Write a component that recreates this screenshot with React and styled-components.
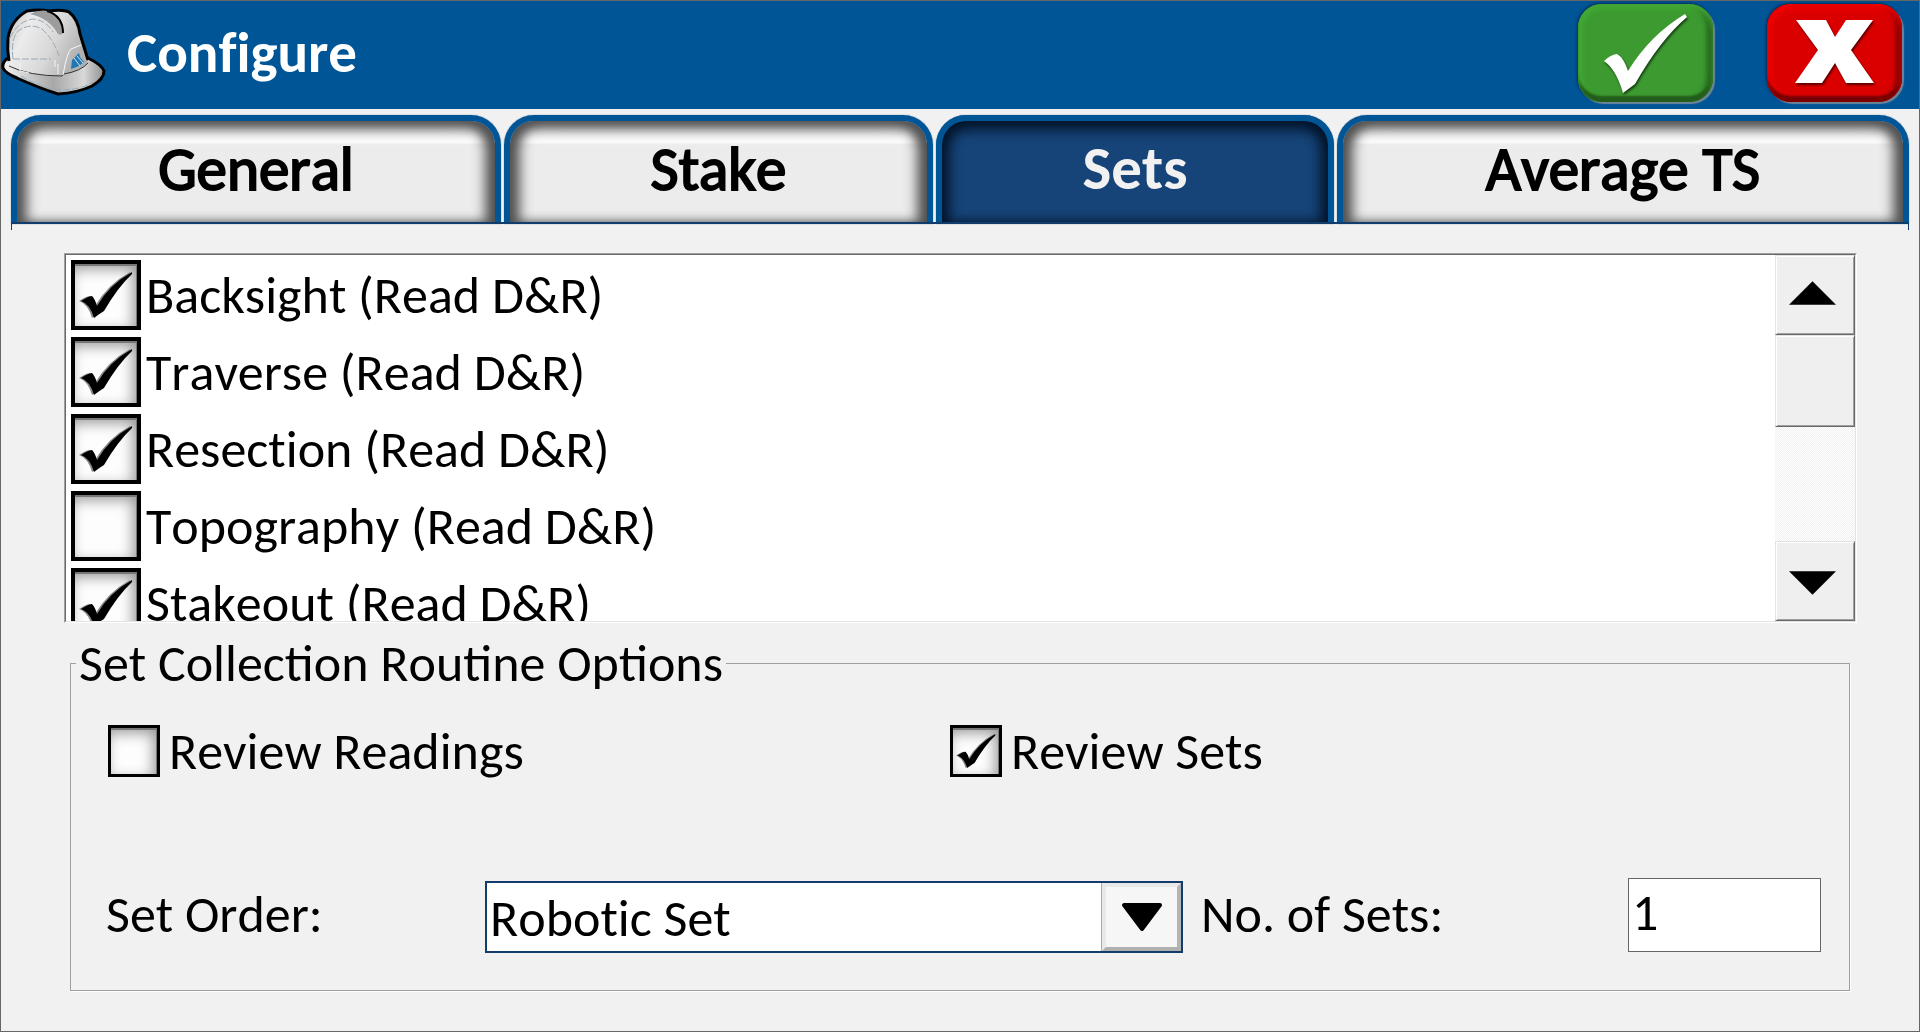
import React, { useState } from "react";
import styled, { createGlobalStyle, css } from "styled-components";

const GlobalStyle = createGlobalStyle`
  *, *::before, *::after { box-sizing: border-box; }
  body { margin: 0; background: #f1f1f1; }
  body, button, input, select {
    font-family: Carlito, Calibri, Lato, "Open Sans", sans-serif;
    font-kerning: none;
    color: #000;
  }
  button, input, select { margin: 0; padding: 0; }
`;

const textSize = css`
  font-size: 52px;
  line-height: 64px;
  font-variant-ligatures: none;
`;

const Window = styled.div`
  display: flex;
  flex-direction: column;
  min-height: 100vh;
  border: 1px solid #666;
  background: #f1f1f1;
`;

const Header = styled.header`
  display: flex;
  align-items: flex-start;
  height: 108px;
  padding: 3px 17px 0 0;
  background: #005596;
`;

const Helmet = styled.svg`
  flex: none;
  width: 105px;
  height: 97px;
`;

const Title = styled.h1`
  flex: 1;
  margin: 0 0 0 21px;
  padding-top: 13px;
  color: #fff;
  font-size: 57px;
  line-height: 72px;
  font-weight: 700;
  font-variant-ligatures: none;
`;

const HeaderActions = styled.div`
  display: flex;
  gap: 54px;
`;

const ActionButton = styled.button`
  display: block;
  width: 135px;
  height: 98px;
  border: 0;
  border-radius: 24px;
  background: ${(p) => p.$fill};
  box-shadow:
    inset 0 5px 6px ${(p) => p.$light},
    inset 0 -6px 2px ${(p) => p.$dark},
    inset -6px 0 5px ${(p) => p.$dark},
    inset 4px 0 6px ${(p) => p.$light},
    2px 2px 1px #6f8597,
    -1px -1px 3px #002c58;
  svg {
    display: block;
    width: 135px;
    height: 98px;
    filter: drop-shadow(1px 2px 1px rgba(0, 0, 0, 0.6));
  }
`;

const TabBar = styled.nav`
  display: flex;
  gap: 3px;
  height: 115px;
  margin: 6px 10px 0 10px;
  padding-bottom: 6px;
  background:
    linear-gradient(#123c6c, #123c6c) left bottom / 1px 6px no-repeat,
    linear-gradient(#123c6c, #123c6c) right bottom / 1px 6px no-repeat;
`;

const Tab = styled.button`
  flex: ${(p) => p.$grow} 1 0;
  border: 6px solid #005596;
  border-bottom: 2px solid #123c6c;
  border-radius: 30px 30px 0 0;
  padding-bottom: ${(p) => (p.$active ? "7px" : "5px")};
  font-size: 61px;
  line-height: 72px;
  font-weight: ${(p) => (p.$active ? 700 : 400)};
  -webkit-text-stroke: ${(p) => (p.$active ? "0" : "2px #000")};
  font-variant-ligatures: none;
  color: ${(p) => (p.$active ? "#f1f1f1" : "#000")};
  background: ${(p) =>
    p.$active
      ? "#164478"
      : "linear-gradient(#fff 21px, #ececec 24px)"};
  box-shadow:
    0 0 1px #123c6c,
    ${(p) =>
      p.$active
        ? "inset 0 8px 14px #03152b, inset 10px 0 14px -4px #03152b, inset -10px 0 14px -4px #03152b"
        : "inset 0 8px 14px #505050, inset 13px 0 14px -4px #505050, inset -13px 0 14px -4px #505050"};
`;

const TabLine = styled.div`
  height: 2px;
  margin: -8px 10px 6px;
  background: #123c6c;
`;

const Page = styled.main`
  display: flex;
  flex-direction: column;
  padding: 23px 62px 40px 63px;
`;

const ListBox = styled.div`
  display: flex;
  height: 370px;
  border: 1px solid;
  border-color: #a0a0a0 #fff #fff #a0a0a0;
  background: #fff;
`;

const ListInner = styled.div`
  display: flex;
  flex: 1;
  min-width: 0;
  border: 1px solid;
  border-color: #696969 #e3e3e3 #e3e3e3 #696969;
`;

const Items = styled.ul`
  flex: 1;
  margin: 0;
  padding: 5px 0 0 5px;
  list-style: none;
  overflow: hidden;
`;

const Item = styled.li`
  display: flex;
  height: 77px;
`;

const CheckLabel = styled.label`
  display: flex;
  align-items: center;
  gap: ${(p) => (p.$small ? "9px" : "5px")};
  height: ${(p) => (p.$small ? "52px" : "70px")};
  ${textSize}
`;

const CheckCell = styled.span`
  display: grid;
  flex: none;
  width: ${(p) => (p.$small ? "52px" : "70px")};
  height: ${(p) => (p.$small ? "52px" : "70px")};
  > * { grid-area: 1 / 1; width: 100%; height: 100%; }
  svg { pointer-events: none; }
`;

const CheckInput = styled.input`
  appearance: none;
  border: ${(p) => (p.$small ? "3px" : "4px")} solid #000;
  background: #fdfdfd;
  box-shadow: inset -1px 2px 0 #777, inset -4px 5px 14px rgba(0, 0, 0, 0.4);
`;

const ScrollBar = styled.div`
  display: flex;
  flex-direction: column;
  width: 80px;
  background: repeating-conic-gradient(#f0f0f0 0 25%, #fff 0 50%) 0 0 / 2px 2px;
`;

const bevel = css`
  border: 1px solid;
  border-color: #e3e3e3 #696969 #696969 #e3e3e3;
  background: #efefef;
  box-shadow: inset 1px 1px 0 #fff, inset -1px -1px 0 #a0a0a0;
`;

const ScrollButton = styled.button`
  display: flex;
  align-items: center;
  justify-content: center;
  height: 80px;
  padding: ${(p) => (p.$down ? "4px 5px 0 0" : "0 5px 4px 0")};
  ${bevel}
`;

const Thumb = styled.div`
  height: 92px;
  margin-bottom: auto;
  ${bevel}
`;

const Group = styled.fieldset`
  min-width: 0;
  margin: 8px 7px 0 6px;
  padding: 30px 28px 37px 35px;
  border: 1px solid #a0a0a0;
  box-shadow: 1px 1px 0 #fff;
`;

const Legend = styled.legend`
  margin-left: -30px;
  padding: 0 3px;
  ${textSize}
  font-variant-ligatures: normal;
`;

const Checks = styled.div`
  display: grid;
  grid-template-columns: 842fr 871fr;
  padding-left: 2px;
`;

const OrderRow = styled.div`
  display: flex;
  align-items: center;
  margin-top: 100px;
`;

const FieldLabel = styled.label`
  flex: none;
  width: ${(p) => p.$width};
  padding: 0 0 2px ${(p) => p.$pad || "0"};
  ${textSize}
`;

const SelectWrap = styled.div`
  display: grid;
  flex: 1;
  height: 72px;
  margin-top: 4px;
  border: 2px solid #123c6c;
  background: #fff;
  > * { grid-area: 1 / 1; }
`;

const Select = styled.select`
  width: 100%;
  height: 100%;
  appearance: none;
  border: 0;
  border-radius: 0;
  padding: 2px 84px 0 3px;
  background: transparent;
  outline: 0;
  ${textSize}
`;

const SelectArrow = styled.span`
  display: flex;
  align-items: center;
  justify-content: center;
  justify-self: end;
  width: 79px;
  border: 4px solid;
  border-color: #e8e8e8 #b4b4b4 #b0b0b0 #e8e8e8;
  background: #f6f6f6;
  box-shadow: -1px 0 0 #aaa;
  pointer-events: none;
`;

const NumberInput = styled.input`
  width: 193px;
  height: 74px;
  border: 1px solid #666;
  border-radius: 0;
  padding: 0 3px 6px;
  background: #fff;
  outline: 0;
  ${textSize}
`;

const CHECK =
  "M9 41 L14 38 Q18 36 20 36 Q23 39 25 46 Q38 24 60 12 L60 14 Q46 27 32 51 Q27 54 22 58 Q18 44 9 41Z";

function Check({ label, small, initial }) {
  const [on, setOn] = useState(initial);
  return (
    <CheckLabel $small={small}>
      <CheckCell $small={small}>
        <CheckInput
          type="checkbox"
          $small={small}
          checked={on}
          onChange={(e) => setOn(e.target.checked)}
        />
        {on && (
          <svg viewBox="0 0 70 70" aria-hidden="true">
            <path d={CHECK} fill="#888" transform="translate(-1 0)" />
            <path d={CHECK} fill="#000" transform="translate(1 0)" />
          </svg>
        )}
      </CheckCell>
      {label}
    </CheckLabel>
  );
}

function HelmetIcon() {
  return (
    <Helmet viewBox="0 4 105 97" aria-hidden="true">
      <defs>
        <linearGradient id="dome" x1="0" y1="0" x2="1" y2="0.4">
          <stop offset="0" stopColor="#bcbcbc" />
          <stop offset="0.3" stopColor="#ececec" />
          <stop offset="0.65" stopColor="#d9d9d9" />
          <stop offset="1" stopColor="#b0b0b0" />
        </linearGradient>
        <linearGradient id="brim" x1="0" y1="0" x2="1" y2="0">
          <stop offset="0" stopColor="#f2f2f2" />
          <stop offset="0.5" stopColor="#a8a8a8" />
          <stop offset="0.8" stopColor="#d8d8d8" />
          <stop offset="1" stopColor="#8f8f8f" />
        </linearGradient>
      </defs>
      <path
        d="M7 58 Q1 62 2 68 Q4 73 16 78 Q38 88 57 94 Q76 93 91 86 Q103 79 103 71 Q101 65 87 58 Z"
        fill="url(#brim)"
        stroke="#000"
        strokeWidth="3"
      />
      <path
        d="M8 66 Q6 52 7 38 Q10 20 26 11 Q38 9 48 11 Q62 9 68 12 Q77 19 79 34 L87 60 Q86 67 76 70 Q66 76 50 76 Q25 74 8 66Z"
        fill="url(#dome)"
      />
      <path
        d="M8 61 Q6 50 7 38 Q10 20 26 11 Q38 9 48 11 Q62 9 68 12 Q77 19 79 34 L87 60"
        fill="none"
        stroke="#000"
        strokeWidth="3"
      />
      <path d="M47 11 Q62 18 62 33 Q60 36 57 34 Q48 18 29 14 Q38 9 47 11Z" fill="#9c9c9c" />
      <path d="M46 11 Q62 16 62 33" fill="none" stroke="#000" strokeWidth="2" />
      <path d="M8 66 Q28 76 61 76 L63 74 Q80 71 87 63" fill="none" stroke="#333" strokeWidth="1" />
      <path
        d="M12 59 Q10 40 16 32 Q28 22 41 29 Q53 40 58 56 M12 59 L50 59 M9 38 Q17 21 32 19 Q45 20 52 32 M20 76 Q40 88 58 90 Q80 90 92 82"
        fill="none"
        stroke="#9aa9b6"
        strokeWidth="1"
        strokeDasharray="7 2"
      />
      <path d="M19 63 L19 71 L28 73 M54 60 L54 67 M57 64 L57 74" fill="none" stroke="#f4f4f4" strokeWidth="1" />
      <path d="M80 45 L70 49 Q66 52 62 75" fill="none" stroke="#f8f8f8" strokeWidth="1" />
      <path d="M78 53 L79 57 L83 62 L78 66 L70 69 L71 60Z" fill="#1f78b4" />
      <path d="M76 56 L82 63 M73 58 L79 66" stroke="#d8e6f0" strokeWidth="1" />
    </Helmet>
  );
}

const TABS = [
  { name: "General", grow: 478 },
  { name: "Stake", grow: 417 },
  { name: "Sets", grow: 386 },
  { name: "Average TS", grow: 560 },
];

const OPTIONS = [
  ["Backsight (Read D&R)", true],
  ["Traverse (Read D&R)", true],
  ["Resection (Read D&R)", true],
  ["Topography (Read D&R)", false],
  ["Stakeout (Read D&R)", true],
];

export default function App() {
  const [tab, setTab] = useState("Sets");
  return (
    <Window>
      <GlobalStyle />
      <Header>
        <HelmetIcon />
        <Title>Configure</Title>
        <HeaderActions>
          <ActionButton aria-label="Accept" $fill="#3c9a30" $light="#43a935" $dark="#235c1b">
            <svg viewBox="0 0 135 98" aria-hidden="true">
              <path
                d="M26 57 Q32 51 39 50 Q46 54 50 67 Q72 31 107 10 L109 13 Q82 36 57 80 L45 89 Q38 65 26 57 Z"
                fill="#fff"
              />
            </svg>
          </ActionButton>
          <ActionButton aria-label="Cancel" $fill="#da0000" $light="#f00000" $dark="#780000">
            <svg viewBox="0 0 135 98" aria-hidden="true">
              <path
                d="M29 16 H59 L68 33 L79 16 H106 L84 46 L107 79 H79 L68 59 L55 79 H28 L51 46Z"
                fill="#fff"
              />
            </svg>
          </ActionButton>
        </HeaderActions>
      </Header>
      <TabBar>
        {TABS.map((t) => (
          <Tab key={t.name} $grow={t.grow} $active={t.name === tab} onClick={() => setTab(t.name)}>
            {t.name}
          </Tab>
        ))}
      </TabBar>
      <TabLine />
      <Page>
        <ListBox>
          <ListInner>
            <Items>
              {OPTIONS.map(([label, on]) => (
                <Item key={label}>
                  <Check label={label} initial={on} />
                </Item>
              ))}
            </Items>
            <ScrollBar>
              <ScrollButton aria-label="Scroll up">
                <svg width="47" height="24" viewBox="0 0 48 24" aria-hidden="true">
                  <path d="M24 0 L48 24 H0Z" />
                </svg>
              </ScrollButton>
              <Thumb />
              <ScrollButton $down aria-label="Scroll down">
                <svg width="47" height="24" viewBox="0 0 48 24" aria-hidden="true">
                  <path d="M0 0 H48 L24 24Z" />
                </svg>
              </ScrollButton>
            </ScrollBar>
          </ListInner>
        </ListBox>
        <Group>
          <Legend>Set Collection Routine Options</Legend>
          <Checks>
            <Check small label="Review Readings" initial={false} />
            <Check small label="Review Sets" initial />
          </Checks>
          <OrderRow>
            <FieldLabel htmlFor="order" $width="379px">
              Set Order:
            </FieldLabel>
            <SelectWrap>
              <Select id="order" defaultValue="Robotic Set">
                <option>Robotic Set</option>
              </Select>
              <SelectArrow>
                <svg width="42" height="30" viewBox="0 0 42 30" aria-hidden="true">
                  <path d="M3 3 H39 L21 27Z" stroke="#000" strokeWidth="4" strokeLinejoin="round" />
                </svg>
              </SelectArrow>
            </SelectWrap>
            <FieldLabel htmlFor="count" $width="445px" $pad="18px">
              No. of Sets:
            </FieldLabel>
            <NumberInput id="count" type="text" inputMode="numeric" defaultValue="1" />
          </OrderRow>
        </Group>
      </Page>
    </Window>
  );
}
